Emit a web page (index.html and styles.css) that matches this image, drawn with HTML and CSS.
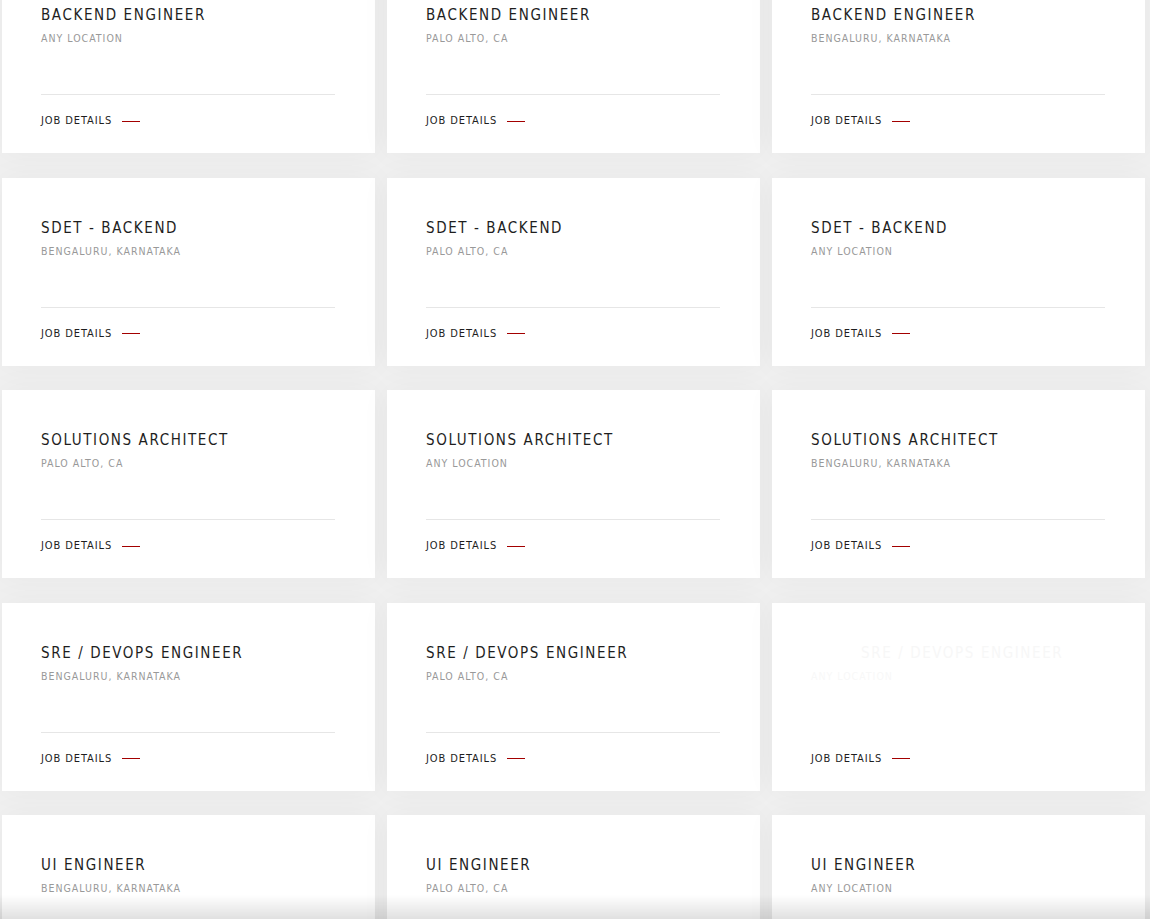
FILE: index.html
```html
<!DOCTYPE html>
<html lang="en">
<head>
<meta charset="utf-8">
<title>Careers</title>
<link rel="stylesheet" href="styles.css">
</head>
<body>
<div class="grid">
  <div class="card"><h3 class="title">BACKEND ENGINEER</h3><p class="loc">ANY LOCATION</p><a class="more">JOB DETAILS<span class="dash"></span></a></div>
  <div class="card"><h3 class="title">BACKEND ENGINEER</h3><p class="loc">PALO ALTO, CA</p><a class="more">JOB DETAILS<span class="dash"></span></a></div>
  <div class="card"><h3 class="title">BACKEND ENGINEER</h3><p class="loc">BENGALURU, KARNATAKA</p><a class="more">JOB DETAILS<span class="dash"></span></a></div>

  <div class="card"><h3 class="title">SDET - BACKEND</h3><p class="loc">BENGALURU, KARNATAKA</p><a class="more">JOB DETAILS<span class="dash"></span></a></div>
  <div class="card"><h3 class="title">SDET - BACKEND</h3><p class="loc">PALO ALTO, CA</p><a class="more">JOB DETAILS<span class="dash"></span></a></div>
  <div class="card"><h3 class="title">SDET - BACKEND</h3><p class="loc">ANY LOCATION</p><a class="more">JOB DETAILS<span class="dash"></span></a></div>

  <div class="card"><h3 class="title">SOLUTIONS ARCHITECT</h3><p class="loc">PALO ALTO, CA</p><a class="more">JOB DETAILS<span class="dash"></span></a></div>
  <div class="card"><h3 class="title">SOLUTIONS ARCHITECT</h3><p class="loc">ANY LOCATION</p><a class="more">JOB DETAILS<span class="dash"></span></a></div>
  <div class="card"><h3 class="title">SOLUTIONS ARCHITECT</h3><p class="loc">BENGALURU, KARNATAKA</p><a class="more">JOB DETAILS<span class="dash"></span></a></div>

  <div class="card"><h3 class="title">SRE / DEVOPS ENGINEER</h3><p class="loc">BENGALURU, KARNATAKA</p><a class="more">JOB DETAILS<span class="dash"></span></a></div>
  <div class="card"><h3 class="title">SRE / DEVOPS ENGINEER</h3><p class="loc">PALO ALTO, CA</p><a class="more">JOB DETAILS<span class="dash"></span></a></div>
  <div class="card card-fading"><h3 class="title">SRE / DEVOPS ENGINEER</h3><p class="loc">ANY LOCATION</p><a class="more">JOB DETAILS<span class="dash"></span></a></div>

  <div class="card"><h3 class="title">UI ENGINEER</h3><p class="loc">BENGALURU, KARNATAKA</p><a class="more">JOB DETAILS<span class="dash"></span></a></div>
  <div class="card"><h3 class="title">UI ENGINEER</h3><p class="loc">PALO ALTO, CA</p><a class="more">JOB DETAILS<span class="dash"></span></a></div>
  <div class="card"><h3 class="title">UI ENGINEER</h3><p class="loc">ANY LOCATION</p><a class="more">JOB DETAILS<span class="dash"></span></a></div>
</div>
<div class="bottom-shade"></div>
</body>
</html>
```

FILE: styles.css
```css
html, body {
  margin: 0;
  padding: 0;
  background: #f0f0f0;
  overflow: hidden;
  height: 919px;
}
body {
  font-family: "DejaVu Sans Condensed", "Liberation Sans", sans-serif;
}
.grid {
  display: grid;
  grid-template-columns: repeat(3, 373px);
  column-gap: 12px;
  row-gap: 24.5px;
  padding-left: 2px;
  margin-top: -35px;
}
.card {
  background: #fff;
  height: 188px;
  box-sizing: border-box;
  padding: 40px 40px 0 39px;
  box-shadow: 0 0 30px rgba(0, 0, 0, 0.04);
  display: flex;
  flex-direction: column;
}
.title {
  margin: 0;
  font-size: 15px;
  font-weight: 400;
  letter-spacing: 1.6px;
  color: #1e1e1e;
  line-height: 20px;
}
.loc {
  margin: 6px 0 0;
  font-size: 10.5px;
  letter-spacing: 1px;
  color: #999999;
  line-height: 14px;
  border-bottom: 1px solid #e6e6e6;
  height: 64px;
  box-sizing: border-box;
  flex: none;
}
.more {
  margin-top: 19px;
  font-size: 11px;
  letter-spacing: 0.9px;
  color: #1e1e1e;
  line-height: 14px;
  display: flex;
  align-items: center;
}
.dash {
  display: inline-block;
  width: 18px;
  height: 1px;
  background: #a30000;
  margin-left: 10px;
}
.card-fading .title { color: #f7f7f7; transform: translateX(50px); }
.card-fading .loc { color: #f8f8f8; border-bottom-color: #fff; }
.bottom-shade {
  position: fixed;
  left: 0;
  right: 0;
  bottom: 0;
  height: 24px;
  background: linear-gradient(to bottom, rgba(0, 0, 0, 0), rgba(0, 0, 0, 0.12));
  pointer-events: none;
}
```
